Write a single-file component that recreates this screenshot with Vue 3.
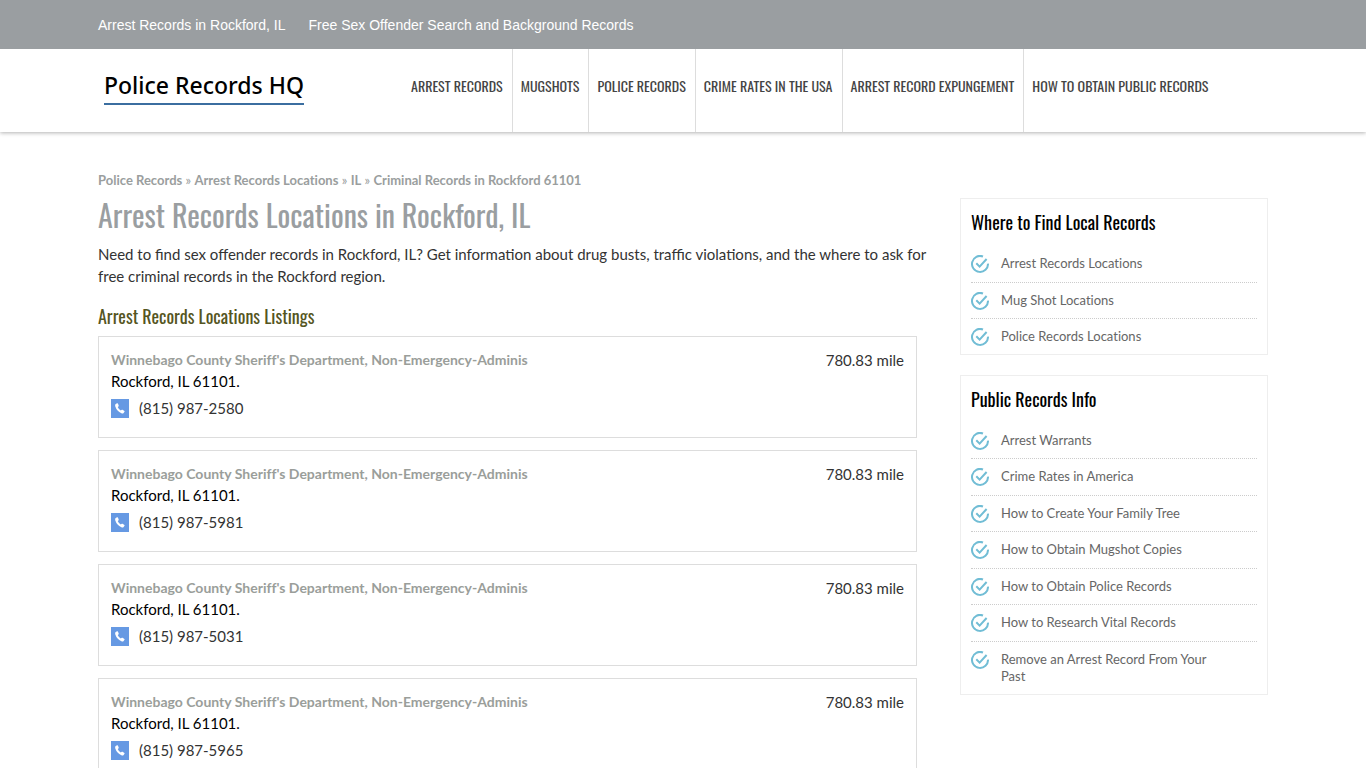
<script setup>
const topLinks = ['Arrest Records in Rockford, IL', 'Free Sex Offender Search and Background Records']
const nav = ['Arrest Records', 'Mugshots', 'Police Records', 'Crime Rates in the USA', 'Arrest Record Expungement', 'How to Obtain Public Records']
const crumbs = ['Police Records', 'Arrest Records Locations', 'IL', 'Criminal Records in Rockford 61101']
const phones = ['(815) 987-2580', '(815) 987-5981', '(815) 987-5031', '(815) 987-5965']
const panels = [
  { title: 'Where to Find Local Records', items: ['Arrest Records Locations', 'Mug Shot Locations', 'Police Records Locations'] },
  {
    title: 'Public Records Info',
    items: ['Arrest Warrants', 'Crime Rates in America', 'How to Create Your Family Tree', 'How to Obtain Mugshot Copies', 'How to Obtain Police Records', 'How to Research Vital Records', 'Remove an Arrest Record From Your Past']
  }
]
</script>

<template>
  <div class="page">
    <div class="topbar">
      <div class="container top-links">
        <a v-for="t in topLinks" :key="t" href="#">{{ t }}</a>
      </div>
    </div>
    <header class="header">
      <div class="container header-row">
        <a class="logo" href="#">Police Records HQ</a>
        <nav class="nav">
          <a v-for="n in nav" :key="n" href="#">{{ n }}</a>
        </nav>
      </div>
    </header>
    <div class="container columns">
      <main class="main">
        <div class="crumbs">
          <template v-for="(c, i) in crumbs" :key="c">
            <span v-if="i" class="sep"> » </span><a href="#">{{ c }}</a>
          </template>
        </div>
        <h1>Arrest Records Locations in Rockford, IL</h1>
        <p class="intro">Need to find sex offender records in Rockford, IL? Get information about drug busts, traffic violations, and the where to ask for free criminal records in the Rockford region.</p>
        <h2>Arrest Records Locations Listings</h2>
        <article v-for="p in phones" :key="p" class="listing">
          <div>
            <a class="name" href="#">Winnebago County Sheriff's Department, Non-Emergency-Adminis</a>
            <div class="address">Rockford, IL 61101.</div>
            <div class="phone">
              <svg viewBox="0 0 18 19" aria-hidden="true">
                <rect width="18" height="19" fill="#6699e3" />
                <path d="M4.4 5.2 L6 4.2 Q6.6 4 6.9 4.6 L7.7 6.6 Q7.8 7.1 7.4 7.5 L6.8 8.2 Q7.6 10.2 9.8 11.6 L10.8 10.8 Q11.2 10.5 11.6 10.8 L13.4 12 Q13.8 12.4 13.5 12.8 L12.4 14.2 Q11.7 14.7 10.4 14.2 Q5.8 12 4.3 7.4 Q3.9 6 4.4 5.2Z" fill="#fff" />
              </svg>
              <span>{{ p }}</span>
            </div>
          </div>
          <span class="distance">780.83 mile</span>
        </article>
      </main>
      <aside class="sidebar">
        <section v-for="panel in panels" :key="panel.title" class="panel">
          <h3>{{ panel.title }}</h3>
          <ul>
            <li v-for="item in panel.items" :key="item">
              <svg viewBox="0 0 18 18" aria-hidden="true">
                <path d="M12 1.5 A8 8 0 1 0 17 8.6" />
                <path d="M5.3 8.3 L8.6 11.6 L15.6 4" />
              </svg>
              <a href="#">{{ item }}</a>
            </li>
          </ul>
        </section>
      </aside>
    </div>
  </div>
</template>

<style>
body {
  background: #fff;
  overflow: hidden;
}
</style>

<style scoped>
.page {
  font-family: Lato, sans-serif;
  font-size: 15px;
  line-height: 22px;
  color: #333;
  font-variant-ligatures: no-common-ligatures;
}
a {
  color: inherit;
  text-decoration: none;
}
.container {
  box-sizing: border-box;
  max-width: 1170px;
  margin: 0 auto;
}
.topbar {
  position: relative;
  z-index: 1;
  background: #9a9ea1;
}
.top-links {
  display: flex;
  gap: 23px;
  padding: 14px 0 13px;
  color: #fff;
  font: 14px/22px "Liberation Sans", Arial, sans-serif;
}
.header {
  box-shadow: 0 1px 4px rgba(0, 0, 0, 0.3);
}
.header-row {
  display: flex;
  align-items: stretch;
  min-height: 83px;
}
.logo {
  align-self: flex-start;
  margin: 20px 99px 0 6px;
  padding-bottom: 1px;
  border-bottom: 2px solid #3b6ea0;
  color: #000;
  font: 500 23px/33px "Noto Sans", "Open Sans", sans-serif;
  white-space: nowrap;
}
.nav {
  display: flex;
}
.nav a {
  padding: 25px 9px 0 8px;
  border-right: 1px solid #ddd;
  color: #444;
  font: 400 14px/24px Oswald, "Liberation Sans Narrow", "Liberation Sans", sans-serif;
  text-transform: uppercase;
  white-space: nowrap;
}
.nav a:last-child {
  border-right: 0;
}
.columns {
  display: flex;
  align-items: flex-start;
  justify-content: space-between;
}
.main {
  width: 70%;
  padding-top: 37px;
}
.crumbs {
  color: #9a9e9e;
  font-size: 13px;
  font-weight: 700;
}
.sep {
  font-weight: 400;
}
h1, h2, h3 {
  margin: 0;
  font-family: Oswald, "Liberation Sans Narrow", "Liberation Sans", sans-serif;
  font-weight: 400;
}
h1 {
  color: #9a9ea1;
  font-size: 30px;
  line-height: 48px;
}
.intro {
  margin: 4px -12px 16px 0;
  font-variant-ligatures: normal;
}
h2 {
  color: #555522;
  font-size: 18px;
  line-height: 26px;
  margin-bottom: 7px;
}
.listing {
  display: flex;
  justify-content: space-between;
  margin-bottom: 12px;
  padding: 13px 12px 18px;
  border: 1px solid #ddd;
}
.name {
  display: block;
  margin-bottom: 2px;
  color: #9a9e9a;
  font-size: 14px;
  font-weight: 700;
  line-height: 19px;
}
.address {
  color: #000;
  line-height: 21px;
}
.distance {
  line-height: 21px;
}
.phone {
  display: flex;
  align-items: center;
  gap: 10px;
  padding-top: 5px;
  color: #333;
}
.phone svg {
  width: 18px;
  height: 19px;
}
.sidebar {
  width: 308px;
  padding-top: 66px;
}
.panel {
  margin-bottom: 20px;
  padding: 9px 10px 0;
  border: 1px solid #eee;
}
h3 {
  color: #000;
  font-size: 18px;
  line-height: 28px;
}
ul {
  margin: 10px 0 0;
  padding: 0;
  list-style: none;
}
li {
  display: flex;
  align-items: flex-start;
  gap: 12px;
  padding: 9px 32px 9px 0;
  border-bottom: 1px dotted #ccc;
  color: #666;
  font-size: 13px;
  line-height: 1.35;
}
li:last-child {
  padding-bottom: 8px;
  border-bottom: 0;
}
li svg {
  flex: none;
  width: 18px;
  height: 18px;
  margin-bottom: -1px;
  fill: none;
  stroke: #71bdd5;
  stroke-width: 2;
}
</style>
